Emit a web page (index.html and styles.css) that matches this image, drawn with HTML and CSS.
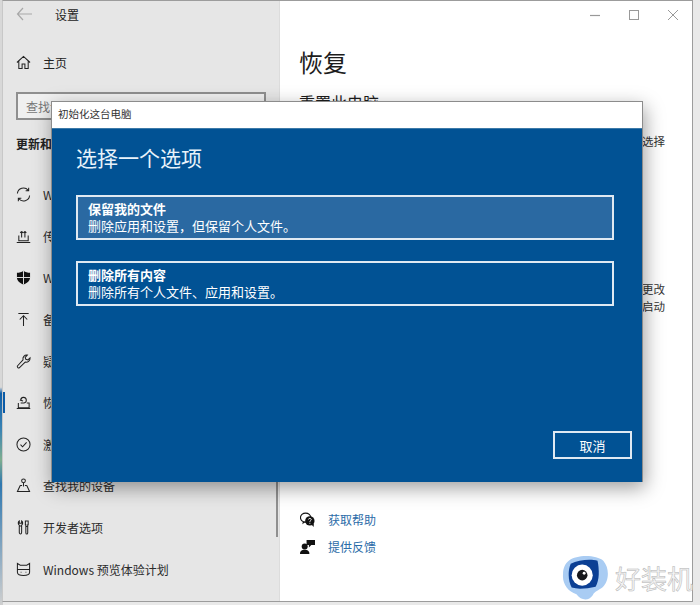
FILE: index.html
```html
<!DOCTYPE html>
<html lang="zh-CN">
<head>
  <meta charset="UTF-8" />
  <title>设置</title>
  <link rel="stylesheet" href="styles.css">
</head>
<body>
  <div class="desktop-strip"></div>
  <div class="window">
    <aside class="sidebar">
      <div class="scroll-thumb"></div>
      <div class="titlebar">
        <svg class="back" width="16" height="14" viewBox="0 0 16 14"><path d="M7 1 1.500 7 7 13M1.500 7H16" fill="none" stroke="#a8a8a8" stroke-width="1.200"/></svg>
        <span>设置</span>
      </div>
      <div class="home">
        <svg class="icon" viewBox="0 0 16 16"><path d="M1 8 8 1.500 15 8M3 6.500V14.500H6.500V9.500H9.500V14.500H13V6.500" fill="none" stroke="#222" stroke-width="1.100"/></svg>
        <span>主页</span>
      </div>
      <div class="search"><span>查找设置</span></div>
      <div class="group">更新和安全</div>
      <ul class="nav">
        <li>
          <svg class="icon" viewBox="0 0 16 16"><path d="M1.500 7A6.500 6.500 0 0 1 13 3.500M14.500 9A6.500 6.500 0 0 1 3 12.500M13.500 .8V4H10.300M2.500 15.200V12H5.700" fill="none" stroke="#222" stroke-width="1.100"/></svg>
          <span>Windows 更新</span>
        </li>
        <li>
          <svg class="icon" viewBox="0 0 16 16"><path d="M3 7V12.500H13V7M.8 14.500H15.200M6 9V2.500M6 2.500 4.500 4.200M6 2.500 7.500 4.200M9.500 9V2.500M9.500 2.500 8 4.200M9.500 2.500 11 4.200" fill="none" stroke="#222" stroke-width="1.100"/></svg>
          <span>传递优化</span>
        </li>
        <li>
          <svg class="icon" viewBox="0 0 16 16"><path d="M8 .8C10 2.200 12.500 3 15 3V8C15 11.500 12 14 8 15.500 4 14 1 11.500 1 8V3C3.500 3 6 2.200 8 .8Z" fill="#111"/><path d="M8 1V15.500M1 8H15" stroke="#e6e6e6" stroke-width="1"/></svg>
          <span>Windows 安全中心</span>
        </li>
        <li>
          <svg class="icon" viewBox="0 0 16 16"><path d="M2.500 1.500H13.500M8 15V4M4 8 8 4 12 8" fill="none" stroke="#222" stroke-width="1.100"/></svg>
          <span>备份</span>
        </li>
        <li>
          <svg class="icon" viewBox="0 0 16 16"><path d="M1.500 12.800 7.500 6.300C6.800 3.500 9 .8 12 1.200L9.800 3.500 10.500 5.700 12.700 6.300 15 4.200C15.200 7.200 12.500 9.300 9.800 8.600L3.500 14.700C2.500 15.300 1 14 1.500 12.800Z" fill="none" stroke="#222" stroke-width="1.100"/></svg>
          <span>疑难解答</span>
        </li>
        <li class="active">
          <svg class="icon" viewBox="0 0 16 16"><path d="M5 5.500A3 3 0 1 1 8.500 8.500H5M6.500 3 4.800 5.500 7.500 6.300M2.500 8.500V13.500H14V8.500H11.500M.8 14.500H15.200" fill="none" stroke="#222" stroke-width="1.100"/></svg>
          <span>恢复</span>
        </li>
        <li>
          <svg class="icon" viewBox="0 0 16 16"><circle cx="8" cy="8" r="7" fill="none" stroke="#222" stroke-width="1.100"/><path d="M4.800 8.200 7 10.400 11.300 5.800" fill="none" stroke="#222" stroke-width="1.100"/></svg>
          <span>激活</span>
        </li>
        <li>
          <svg class="icon" viewBox="0 0 16 16"><circle cx="8" cy="3" r="2" fill="none" stroke="#222" stroke-width="1.100"/><path d="M8 5V9M4.500 8H6.500M9.500 8H11.500M4.500 8 1.500 14.500H14.500L11.500 8" fill="none" stroke="#222" stroke-width="1.100"/></svg>
          <span>查找我的设备</span>
        </li>
        <li>
          <svg class="icon" viewBox="0 0 16 16"><path d="M3.500 1V3.500H6V1C7.500 2 7.500 4.500 6 5.500V13C6 15.500 3.500 15.500 3.500 13V5.500C2 4.500 2 2 3.500 1ZM10 1H13V5H12.500V13.500C12.500 15.500 10.500 15.500 10.500 13.500V5H10ZM3.500 6.500H6M10.500 7H12.500" fill="none" stroke="#222" stroke-width="1.100"/></svg>
          <span>开发者选项</span>
        </li>
        <li>
          <svg class="icon" viewBox="0 0 16 16"><path d="M1.500 1.500 4.500 3.500H11.500L14.500 1.500V11C14.500 13.500 12 14.500 8 14.500S1.500 13.500 1.500 11ZM1 8H15M5 11H5.800M10.200 11H11" fill="none" stroke="#222" stroke-width="1.100"/></svg>
          <span>Windows 预览体验计划</span>
        </li>
      </ul>
    </aside>

    <main class="content">
      <div class="caption">
        <svg width="12" height="12" viewBox="0 0 12 12"><path d="M1 6.500H11" stroke="#999" stroke-width="1.200"/></svg>
        <svg width="12" height="12" viewBox="0 0 12 12"><rect x="1.500" y="1.500" width="9" height="9" fill="none" stroke="#999"/></svg>
        <svg width="12" height="12" viewBox="0 0 12 12"><path d="M1 1 11 11M11 1 1 11" stroke="#999"/></svg>
      </div>
      <h1>恢复</h1>
      <h2>重置此电脑</h2>
      <p class="side-text first">选择</p>
      <p class="side-text second">更改<br>启动</p>
      <div class="links">
        <a>
          <svg class="link-icon" viewBox="0 0 16 16"><ellipse cx="6" cy="6" rx="5.500" ry="4.800" fill="none" stroke="#111" stroke-width="1.200"/><path d="M3 10 2.500 13 6 10.500" fill="#111"/><circle cx="10.500" cy="9.500" r="5" fill="#111"/><path d="M12.500 13.500 14.500 16 14.800 12" fill="#111"/><path d="M9 8C9 6.500 12 6.500 12 8 12 9.200 10.500 9 10.500 10.500M10.500 11.500V12.500" fill="none" stroke="#fff"/></svg>
          <span>获取帮助</span>
        </a>
        <a>
          <svg class="link-icon" viewBox="0 0 16 16"><circle cx="5" cy="8" r="3.200" fill="#111"/><path d="M0 16C0 12.500 2 11.500 5 11.500S10 12.500 10 16Z" fill="#111"/><path d="M7 1H16V6.500H12L9.500 9V6.500H7Z" fill="#111"/></svg>
          <span>提供反馈</span>
        </a>
      </div>
      <div class="watermark">
        <svg width="50" height="46" viewBox="0 0 52 48">
          <path d="M7 6C16 -1 36 0 43 6 50 14 49 28 42 34 38 37 34 38 32 42 28 48 20 48 15 41 6 38 0 30 1 20 1 14 3 9 7 6Z" fill="#a9ccf3"/>
          <path d="M9 9C17 5 30 4 37 6 39 16 39 26 35 33 26 35 17 36 10 34 6 26 6 16 9 9Z" fill="#0b3f94"/>
          <circle cx="21" cy="21" r="11" fill="#fff"/>
          <circle cx="21" cy="21" r="5.500" fill="#17181c"/>
          <circle cx="23" cy="19" r="1.500" fill="#fff"/>
        </svg>
        <span>好装机</span>
      </div>
    </main>

    <section class="dialog">
      <div class="dialog-title">初始化这台电脑</div>
      <div class="dialog-body">
        <div class="dialog-heading">选择一个选项</div>
        <div class="option selected">
          <b>保留我的文件</b>
          <span>删除应用和设置，但保留个人文件。</span>
        </div>
        <div class="option">
          <b>删除所有内容</b>
          <span>删除所有个人文件、应用和设置。</span>
        </div>
        <div class="dialog-actions">
          <button>取消</button>
        </div>
      </div>
    </section>
  </div>
</body>
</html>
```

FILE: styles.css
```css
* { box-sizing: border-box; }

html, body {
  margin: 0;
  height: 605px;
  overflow: hidden;
}

body {
  font-family: "Noto Sans CJK SC", "Noto Sans", sans-serif;
  font-size: 12px;
  color: #222;
  background: #e9e9e9;
  position: relative;
}

.desktop-strip {
  position: absolute;
  left: 0;
  top: 0;
  width: 3px;
  height: 605px;
  background: linear-gradient(180deg, #d8d8d8 0, #d8d8d8 64%, #0f5ea8 65%, #3b84b4 71%, #7fae8f 76%, #2f78b0 80%, #cfcfcf 100%);
}

.window {
  position: absolute;
  left: 2px;
  top: 0;
  width: 691px;
  height: 602px;
  display: flex;
  background: #fff;
  border: 1px solid #9c9c9c;
  border-left-color: #c8c8c8;
}

/* left column */
.sidebar {
  width: 277px;
  flex: none;
  background: #e6e6e6;
  padding-left: 13px;
  border-right: 1px solid #dcdcdc;
  position: relative;
}

.scroll-thumb {
  position: absolute;
  right: 1px;
  top: 300px;
  width: 2px;
  height: 236px;
  background: #8f8f8f;
}

.titlebar {
  height: 29px;
  display: flex;
  align-items: center;
  gap: 23px;
  font-size: 12px;
  padding-bottom: 3px;
}

.home {
  display: flex;
  align-items: center;
  gap: 12px;
  margin-top: 18px;
  height: 28px;
  font-size: 12px;
}

.icon {
  width: 15px;
  height: 15px;
  flex: none;
}

.search {
  width: 250px;
  height: 28px;
  margin-top: 16px;
  border: 2px solid #8f8f8f;
  background: #f0f0f0;
  padding: 0 8px;
  display: flex;
  align-items: center;
  color: #777;
  font-size: 12px;
}

.group {
  font-weight: 700;
  font-size: 12px;
  margin-top: 15px;
  height: 18px;
  line-height: 18px;
}

.nav {
  list-style: none;
  margin: 21px 0 0;
  padding: 0;
}

.nav li {
  height: 41.6px;
  display: flex;
  align-items: center;
  gap: 12px;
  font-size: 12px;
  color: #2b2b2b;
}

.nav li.active {
  position: relative;
}

.nav li.active::before {
  content: "";
  position: absolute;
  left: -13px;
  top: 10px;
  width: 2px;
  height: 21px;
  background: #0a5ba8;
}

/* right column */
.content {
  flex: 1;
  padding-left: 19px;
  position: relative;
}

.caption {
  height: 29px;
  display: flex;
  justify-content: flex-end;
  align-items: center;
  gap: 27px;
  padding: 0 13px 2px 0;
}

h1 {
  margin: 13px 0 0;
  font-size: 24px;
  font-weight: 400;
  line-height: 38px;
  color: #1c1c1c;
}

h2 {
  margin: 10px 0 0;
  font-size: 16px;
  font-weight: 400;
  line-height: 22px;
  color: #1c1c1c;
}

.side-text {
  position: absolute;
  left: 362px;
  margin: 0;
  font-size: 11.500px;
  line-height: 17px;
  color: #333;
}

.side-text.first { top: 132px; }
.side-text.second { top: 280px; }

.links {
  position: absolute;
  left: 20px;
  top: 509px;
  display: flex;
  flex-direction: column;
  gap: 9px;
}

.links a {
  display: flex;
  align-items: center;
  gap: 13px;
  height: 18px;
  color: #2b6ca8;
  font-size: 12px;
}

.link-icon {
  width: 15px;
  height: 15px;
  flex: none;
}

.watermark {
  position: absolute;
  left: 282px;
  top: 554px;
  display: flex;
  align-items: center;
  gap: 3px;
  font-size: 26px;
  line-height: 30px;
  color: #f4f4f4;
  -webkit-text-stroke: 0.5px #b4b4b4;
  white-space: nowrap;
}

/* modal */
.dialog {
  position: absolute;
  left: 48px;
  top: 100px;
  width: 592px;
  height: 381px;
  display: flex;
  flex-direction: column;
  border: 1px solid #8c8c8c;
  border-bottom: 0;
  box-shadow: 2px 6px 18px rgba(0, 0, 0, 0.38);
}

.dialog-title {
  height: 26px;
  flex: none;
  background: #fff;
  display: flex;
  align-items: center;
  padding: 0 0 4px 6px;
  font-size: 10.500px;
  color: #333;
}

.dialog-body {
  flex: 1;
  background: #015294;
  border-top: 1px solid #3d7aa8;
  padding: 13px 10px 23px 24px;
  display: flex;
  flex-direction: column;
  color: #fff;
}

.dialog-heading {
  font-size: 21px;
  line-height: 30px;
  margin-bottom: 23px;
  color: #e8f2fa;
}

.option {
  width: 538px;
  height: 45px;
  border: 2px solid #dfe9f2;
  padding: 3px 10px 0;
  display: flex;
  flex-direction: column;
  font-size: 13px;
  line-height: 17px;
  margin-bottom: 21px;
}

.option.selected {
  background: #2a69a2;
}

.option b {
  font-weight: 700;
}

.dialog-actions {
  margin-top: auto;
  display: flex;
  justify-content: flex-end;
}

button {
  width: 79px;
  height: 28px;
  background: transparent;
  border: 2px solid #dfe9f2;
  color: #fff;
  font: inherit;
  font-size: 13px;
  padding: 0;
}
```
